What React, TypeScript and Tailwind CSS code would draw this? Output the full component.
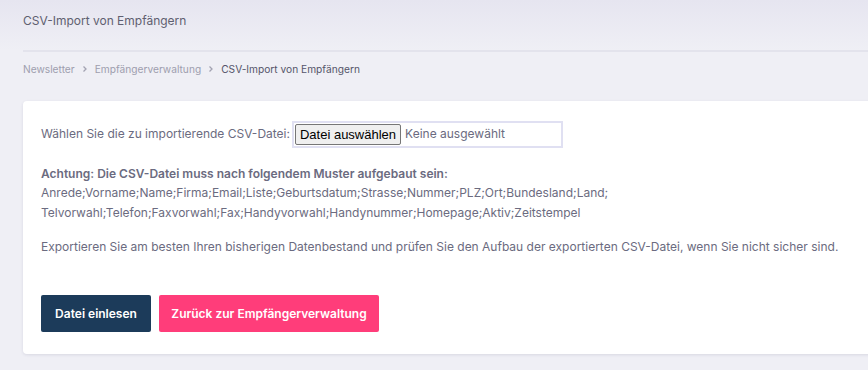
import React from "react";

const Chevron = () => (
  <svg width="8" height="8" viewBox="0 0 8 8" className="mx-[6px] block" fill="none">
    <path d="M2.5 1.5 L5 4 L2.5 6.5" stroke="#a3a3b2" strokeWidth="1.3" />
  </svg>
);

export default function App() {
  return (
    <div
      className="w-[868px] h-[370px] overflow-hidden bg-[#efeff5] text-[#6b6b80]"
      style={{ fontFamily: "Inter, 'Noto Sans', sans-serif" }}
    >
      <div className="bg-gradient-to-b from-[#e6e5f0] to-[#efeff5] h-[50px] pl-[23px] pt-[13px]">
        <div className="text-[12px] text-[#5f5f70] leading-[16px]">CSV-Import von Empfängern</div>
      </div>
      <div className="ml-[23px] h-[2px] bg-[#e3e3ec]" />
      <div className="pl-[23px] pt-[10px] h-[49px] flex items-start text-[10.2px] leading-[14px]">
        <div className="flex items-center h-[14px]">
          <span className="text-[#9e9eae]">Newsletter</span>
          <Chevron />
          <span className="text-[#9e9eae]">Empfängerverwaltung</span>
          <Chevron />
          <span className="text-[#55556a]">CSV-Import von Empfängern</span>
        </div>
      </div>
      <div className="ml-[23px] w-[860px] h-[253px] bg-white rounded-[4px] shadow-[0_1px_3px_rgba(60,60,100,0.12)] pl-[18px] pt-[19px] text-[12px]">
        <div className="flex items-center h-[28px]">
          <span>Wählen Sie die zu importierende CSV-Datei:</span>
          <div className="ml-[2px] flex items-center w-[271px] h-[27px] border-2 border-[#e0e0f2] pl-[1px]">
            <span
              className="h-[21px] px-[4px] bg-[#efefef] border border-[#767676] rounded-[2px] text-[13px] text-black leading-[19px]"
              style={{ fontFamily: "'Liberation Sans', Arial, sans-serif" }}
            >
              Datei auswählen
            </span>
            <span className="ml-[4px] text-[12px] text-[#6b6b80]">Keine ausgewählt</span>
          </div>
        </div>
        <div className="mt-[17px]">
          <div className="font-semibold leading-[18px]">Achtung: Die CSV-Datei muss nach folgendem Muster aufgebaut sein:</div>
          <div className="leading-[20px]">Anrede;Vorname;Name;Firma;Email;Liste;Geburtsdatum;Strasse;Nummer;PLZ;Ort;Bundesland;Land;</div>
          <div className="leading-[20px]">Telvorwahl;Telefon;Faxvorwahl;Fax;Handyvorwahl;Handynummer;Homepage;Aktiv;Zeitstempel</div>
        </div>
        <div className="mt-[14px] leading-[20px]">
          Exportieren Sie am besten Ihren bisherigen Datenbestand und prüfen Sie den Aufbau der exportierten CSV-Datei, wenn Sie nicht sicher sind.
        </div>
        <div className="mt-[38px] flex gap-[8px]">
          <button className="h-[37px] w-[110px] bg-[#1c3b5a] rounded-[2px] text-white text-[12px] font-semibold">
            Datei einlesen
          </button>
          <button className="h-[37px] w-[220px] bg-[#ff3d7a] rounded-[2px] text-white text-[12px] font-semibold">
            Zurück zur Empfängerverwaltung
          </button>
        </div>
      </div>
    </div>
  );
}
